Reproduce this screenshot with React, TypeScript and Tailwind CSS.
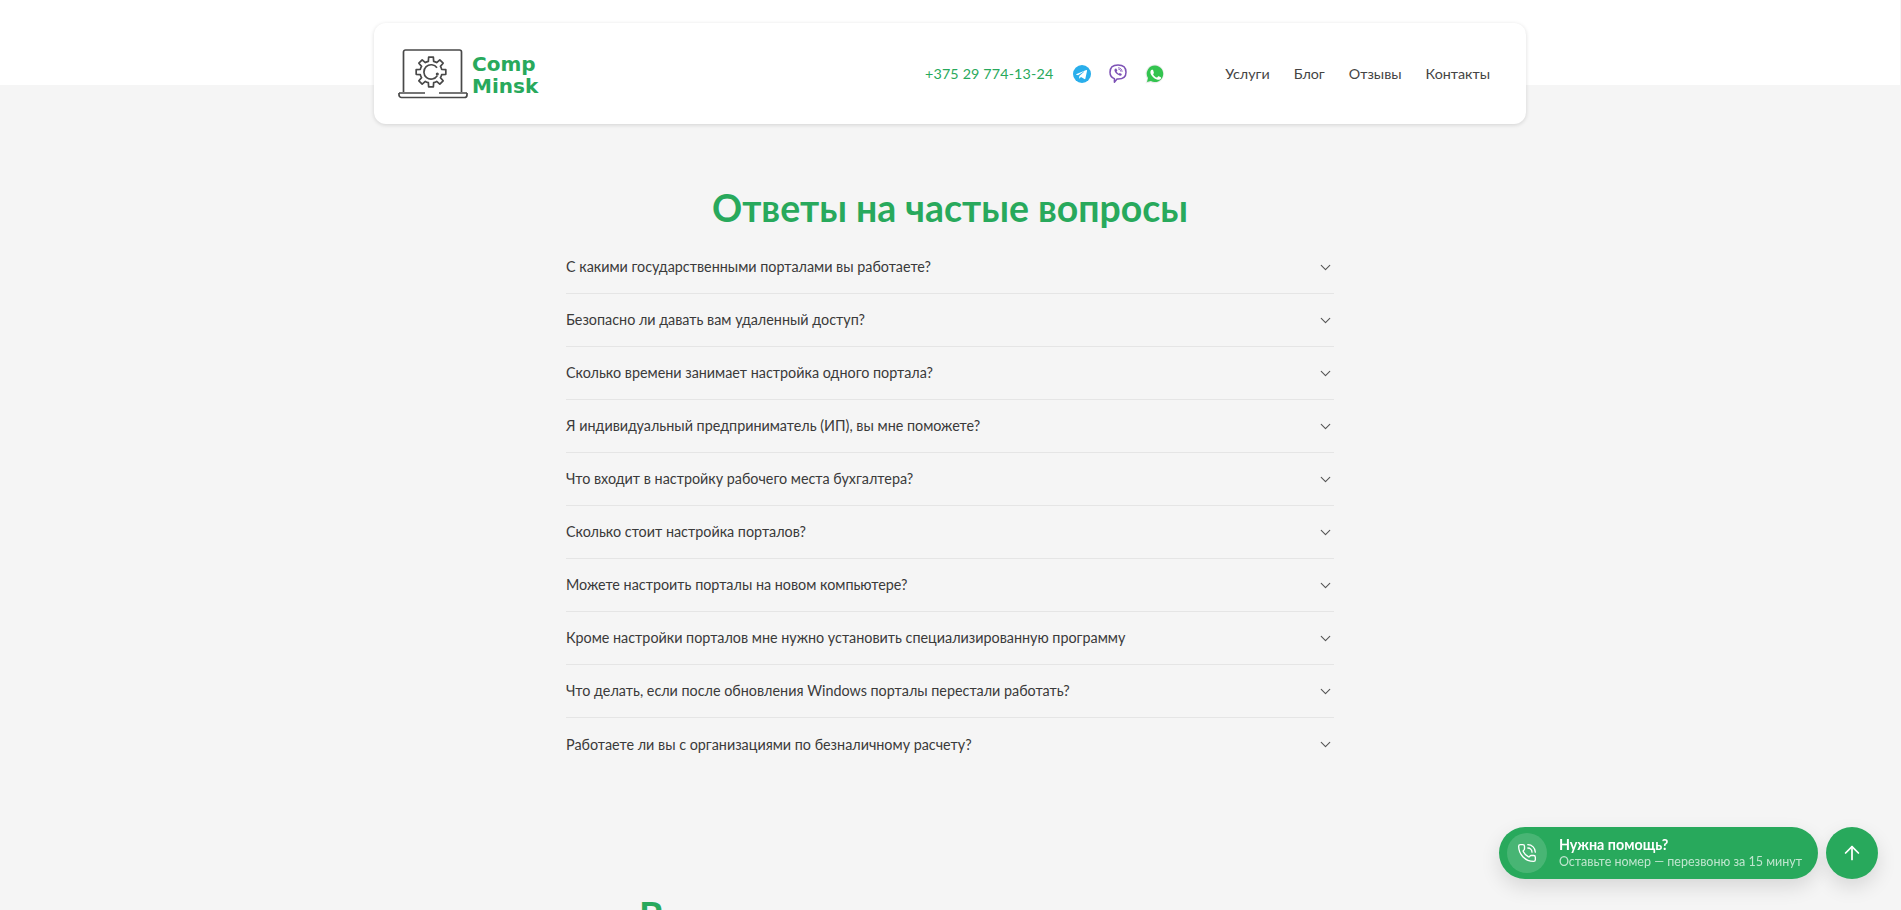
import React from "react";
import { ChevronDown, ArrowUp, PhoneCall } from "lucide-react";

const faqs = [
  "С какими государственными порталами вы работаете?",
  "Безопасно ли давать вам удаленный доступ?",
  "Сколько времени занимает настройка одного портала?",
  "Я индивидуальный предприниматель (ИП), вы мне поможете?",
  "Что входит в настройку рабочего места бухгалтера?",
  "Сколько стоит настройка порталов?",
  "Можете настроить порталы на новом компьютере?",
  "Кроме настройки порталов мне нужно установить специализированную программу",
  "Что делать, если после обновления Windows порталы перестали работать?",
  "Работаете ли вы с организациями по безналичному расчету?",
];

function gearPath() {
  const pt = (r: number, deg: number) => {
    const t = (deg * Math.PI) / 180;
    return `${(r * Math.cos(t)).toFixed(2)} ${(r * Math.sin(t)).toFixed(2)}`;
  };
  let d = "";
  for (let i = 0; i < 8; i++) {
    const a = i * 45 - 90;
    d += `${i === 0 ? "M" : "A11 11 0 0 1 "}${pt(11, a - 14)} L${pt(15, a - 9)} L${pt(15, a + 9)} L${pt(11, a + 14)} `;
  }
  return d + `A11 11 0 0 1 ${pt(11, -104)} Z`;
}

function Logo() {
  return (
    <svg width="70" height="50" viewBox="0 0 70 50" fill="none" stroke="#484848" strokeWidth="1.7" className="shrink-0">
      <path d="M5.500 43V3a2 2 0 0 1 2-2h54a2 2 0 0 1 2 2v40" />
      <path d="M1 44h26M41 44h28M1 44v2a2.500 2.500 0 0 0 2.500 2.500h63a2.500 2.500 0 0 0 2.500-2.500v-2" />
      <g transform="translate(33 23)">
        <path d={gearPath()} strokeLinejoin="round" />
        <path d="M6.300 3.600A7.200 7.200 0 1 1 6 -4.200" />
        <circle cx="6.300" cy="2" r="0.7" />
      </g>
    </svg>
  );
}

function Telegram() {
  return (
    <svg width="18" height="18" viewBox="0 0 18 18">
      <circle cx="9" cy="9" r="9" fill="#29aeeb" />
      <path d="M3.600 8.900l9.700-3.800c.5-.2.900.1.700.8l-1.600 7.700c-.1.600-.5.700-1 .4L8 12.100l-1.300 1.200c-.2.200-.3.300-.6.300l.2-2.600 4.800-4.300c.2-.2 0-.3-.3-.1L5 10.300 3.500 9.800c-.6-.2-.6-.6.100-.9z" fill="#fff" />
    </svg>
  );
}

function Viber() {
  return (
    <svg width="18" height="20" viewBox="0 0 18 20" fill="none" stroke="#7d51b5" strokeWidth="1.500">
      <path d="M9 1c4.600 0 8 1.600 8 7.200 0 5.200-3.200 6.800-8 6.800l-1 0-2.600 3.200V14.600C2.400 13.600 1 11.800 1 8.200 1 2.600 4.400 1 9 1z" strokeLinejoin="round" />
      <path d="M6 4.800l1.200-.3 1.200 2-.8 1c.4 1 1.200 1.800 2.200 2.200l1-.8 2 1.200-.3 1.200c-.5.5-1.300.5-2 .2C7.800 10.400 6.200 8.800 5.500 6.800c-.2-.7 0-1.500.5-2z" fill="#7d51b5" stroke="none" />
      <path d="M9.500 3.800c2 .1 3.500 1.600 3.600 3.600M9.800 5.300c1.100.1 1.800.8 1.900 1.900" strokeWidth="0.900" strokeLinecap="round" />
    </svg>
  );
}

function WhatsApp() {
  return (
    <svg width="20" height="20" viewBox="0 0 20 20">
      <path d="M10 .4a9.400 9.400 0 0 0-8 14.300L.6 19.600l5-1.300A9.400 9.400 0 1 0 10 .4z" fill="#ebebeb" />
      <path d="M10 1.600a8.200 8.200 0 0 0-7 12.500l-1 3.800 3.900-1A8.200 8.200 0 1 0 10 1.600z" fill="#33c44f" />
      <path d="M7.300 5.700c-.3 0-.6.100-.9.400-.4.400-1 1-1 2.300s1 2.700 1.100 2.900c.1.200 1.900 3 4.700 4 2.100.8 2.600.5 3.100.5s1.400-.6 1.600-1.200c.2-.6.200-1.100.1-1.200-.1-.1-.3-.2-.6-.4l-1.700-.8c-.3-.1-.5-.1-.7.200l-.8 1c-.2.200-.3.200-.6.100-1-.5-2.400-1.300-3.400-3.100-.1-.3 0-.4.100-.5l.5-.7c.1-.2.100-.4 0-.6L8.200 6.200c-.2-.5-.5-.5-.9-.5z" fill="#fff" />
    </svg>
  );
}

export default function App() {
  return (
    <div className="h-[910px] overflow-hidden bg-[#f5f5f5] pr-px font-['Lato',sans-serif] text-[#333]">
      <div className="h-[85px] bg-white">
        <div className="mx-auto w-[1152px] pt-[23px]">
          <header className="flex h-[101px] items-center rounded-xl bg-white pr-[36px] pl-[24px] shadow-[0_1px_4px_rgba(0,0,0,0.14)]">
            <a className="flex items-center gap-[4px]">
              <Logo />
              <span className="mt-[3px] font-['DejaVu_Sans',sans-serif] text-[20px] leading-[22px] font-bold text-[#28a95c]">
                Comp
                <br />
                Minsk
              </span>
            </a>
            <a className="ml-auto text-[14.300px] tracking-[0.15px] text-[#28a95c]">+375 29 774-13-24</a>
            <div className="ml-[20px] flex items-center gap-[18px]">
              <Telegram />
              <Viber />
              <WhatsApp />
            </div>
            <nav className="ml-[60px] flex gap-[24px] text-[14.300px] text-[#444]">
              <a>Услуги</a>
              <a>Блог</a>
              <a>Отзывы</a>
              <a>Контакты</a>
            </nav>
          </header>
        </div>
      </div>

      <main className="pt-[99px]">
        <h1 className="text-center text-[37.400px] leading-[48px] font-bold text-[#28a95c]">Ответы на частые вопросы</h1>
        <ul className="mx-auto mt-[9px] w-[768px]">
          {faqs.map((q, i) => (
            <li key={q} className={`flex h-[53px] items-center justify-between ${i < faqs.length - 1 ? "border-b border-[#e5e5e5]" : ""}`}>
              <span className="text-[14.350px] text-[#3a3a3a]">{q}</span>
              <ChevronDown size={17} strokeWidth={1.6} className="text-[#555]" />
            </li>
          ))}
        </ul>
        <h2 className="mx-auto mt-[121px] w-[622px] text-[37.400px] leading-[48px] font-bold text-[#28a95c]">В</h2>
      </main>

      <div className="fixed right-[23px] bottom-[31px] flex gap-[8px]">
        <a className="flex h-[52px] items-center gap-[12px] rounded-full bg-[#28a95c] pr-[16px] pl-[8px] shadow-[0_8px_20px_rgba(0,0,0,0.12)]">
          <span className="flex h-[40px] w-[40px] items-center justify-center rounded-full bg-white/15 text-white">
            <PhoneCall size={20} strokeWidth={1.6} />
          </span>
          <span className="flex flex-col">
            <span className="text-[14.300px] leading-[18px] font-bold text-white">Нужна помощь?</span>
            <span className="text-[12.500px] leading-[16px] text-white/70">Оставьте номер — перезвоню за 15 минут</span>
          </span>
        </a>
        <a className="flex h-[52px] w-[52px] items-center justify-center rounded-full bg-[#28a95c] text-white shadow-[0_8px_20px_rgba(0,0,0,0.12)]">
          <ArrowUp size={22} strokeWidth={1.9} />
        </a>
      </div>
    </div>
  );
}
